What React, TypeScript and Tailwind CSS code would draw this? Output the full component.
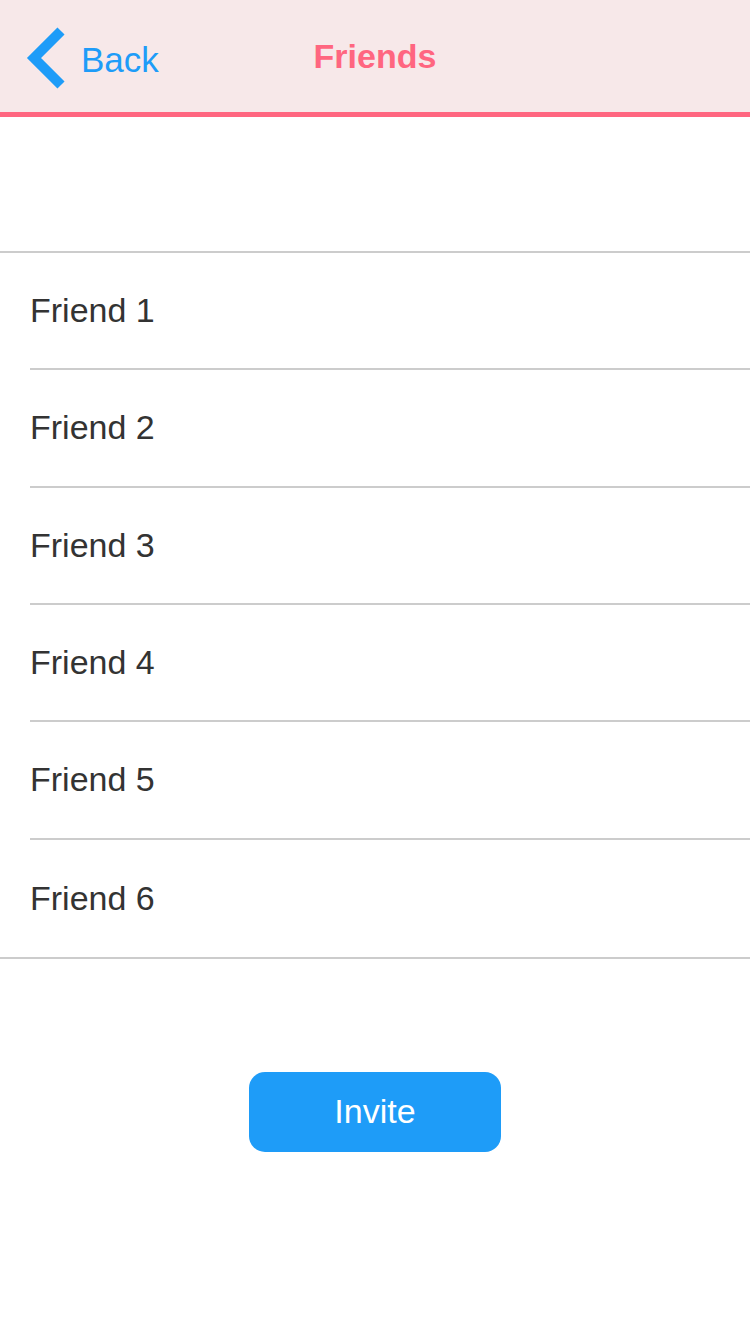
import React from "react";

export default function App() {
  const friends = ["Friend 1", "Friend 2", "Friend 3", "Friend 4", "Friend 5", "Friend 6"];
  return (
    <div className="w-[750px] h-[1334px] bg-white" style={{ fontFamily: '"Liberation Sans", Arial, sans-serif' }}>
      <div className="relative h-[117px] bg-[#f7e8e9] border-b-[5px] border-[#ff6680] flex items-center">
        <div className="flex items-center pl-[25px] pt-[3px]">
          <svg width="42" height="62" viewBox="0 0 42 62" className="block">
            <polyline points="36,4 9,31 36,58" fill="none" stroke="#1e9cf8" strokeWidth="10" strokeLinecap="butt" strokeLinejoin="miter" />
          </svg>
          <span className="ml-[14px] text-[35px] leading-none text-[#1e9cf8] mt-[4px]">Back</span>
        </div>
        <div className="absolute left-0 right-0 top-[39px] text-center text-[34px] leading-none font-bold text-[#ff6680]">Friends</div>
      </div>
      <div className="h-[134px]" />
      <div className="border-t-2 border-b-2 border-[#cccccc]">
        {friends.map((f, i) => (
          <div key={f} className="pl-[30px]">
            <div
              className={
                "h-[117.33px] flex items-center text-[34px] text-[#333333] " +
                (i < friends.length - 1 ? "border-b-2 border-[#cccccc]" : "")
              }
            >
              <span>{f}</span>
            </div>
          </div>
        ))}
      </div>
      <div className="flex justify-center mt-[113px]">
        <button className="w-[252px] h-[80px] rounded-[16px] bg-[#1e9cf8] text-white text-[34px] flex items-center justify-center">
          Invite
        </button>
      </div>
    </div>
  );
}
